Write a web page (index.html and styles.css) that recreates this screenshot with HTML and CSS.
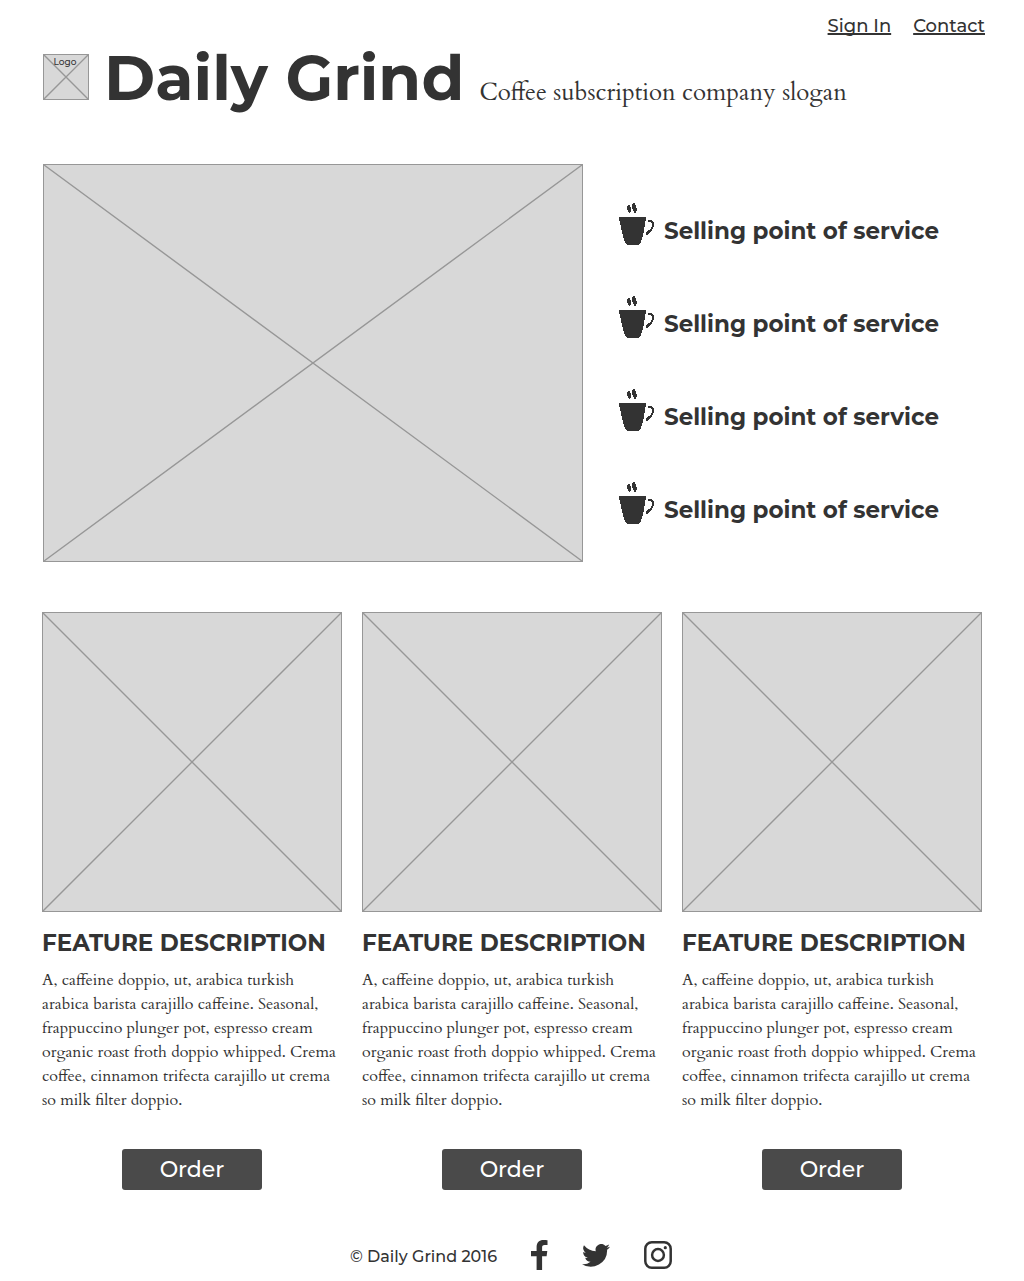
FILE: index.html
```html
<!DOCTYPE html>
<html lang="en">
<head>
  <meta charset="utf-8">
  <meta name="viewport" content="width=device-width, initial-scale=1">
  <title>Daily Grind</title>
  <link rel="stylesheet" href="styles.css">
</head>
<body>
  <svg class="defs" aria-hidden="true">
    <symbol id="cup" viewBox="0 0 36 42">
      <path d="M0 14h27v4h-1v6h-1v6h-1v4h-1v3h-1v3h-1v1h-1v1H8v-1H7v-1H6v-2H5v-3H4v-4H3v-4H2v-5H1v-4H0z"/>
      <path d="M9 2h2v2h1v5h-1v1h-1V9H9V7H8V3h1zM14 0h2v2h1v3h1v3h-1v2h-2V8h-1V6h-1V1h1z"/>
      <path d="M29 17h4v1h1v1h1v5h-1v2h-1v2h-1v1h-1v1h-1v1h-1v1h-2v-3h1v-1h1v-1h2v-1h1v-2h1v-4h-1v-1h-3z"/>
    </symbol>
  </svg>

  <div class="page">
    <nav class="top-nav">
      <a href="#signin">Sign In</a>
      <a href="#contact">Contact</a>
    </nav>

    <header class="brand">
      <div class="logo">
        <svg class="cross" viewBox="0 0 100 100" preserveAspectRatio="none" aria-hidden="true"><path d="M0 0L100 100M100 0L0 100"/></svg>
        <span class="logo-label">Logo</span>
      </div>
      <h1>Daily Grind</h1>
      <p class="slogan">Coffee subscription company slogan</p>
    </header>

    <main>
      <section class="hero">
        <div class="hero-image"><svg class="cross" viewBox="0 0 100 100" preserveAspectRatio="none" aria-hidden="true"><path d="M0 0L100 100M100 0L0 100"/></svg></div>
        <ul class="points">
          <li><svg class="cup" aria-hidden="true"><use href="#cup"/></svg><span>Selling point of service</span></li>
          <li><svg class="cup" aria-hidden="true"><use href="#cup"/></svg><span>Selling point of service</span></li>
          <li><svg class="cup" aria-hidden="true"><use href="#cup"/></svg><span>Selling point of service</span></li>
          <li><svg class="cup" aria-hidden="true"><use href="#cup"/></svg><span>Selling point of service</span></li>
        </ul>
      </section>

      <section class="features">
        <article class="feature">
          <div class="feature-image"><svg class="cross" viewBox="0 0 100 100" preserveAspectRatio="none" aria-hidden="true"><path d="M0 0L100 100M100 0L0 100"/></svg></div>
          <h2>FEATURE DESCRIPTION</h2>
          <p>A, caffeine doppio, ut, arabica turkish <br>arabica barista carajillo caffeine. Seasonal, <br>frappuccino plunger pot, espresso cream <br>organic roast froth doppio whipped. Crema <br>coffee, cinnamon trifecta carajillo ut crema <br>so milk filter doppio.</p>
          <button type="button">Order</button>
        </article>
        <article class="feature">
          <div class="feature-image"><svg class="cross" viewBox="0 0 100 100" preserveAspectRatio="none" aria-hidden="true"><path d="M0 0L100 100M100 0L0 100"/></svg></div>
          <h2>FEATURE DESCRIPTION</h2>
          <p>A, caffeine doppio, ut, arabica turkish <br>arabica barista carajillo caffeine. Seasonal, <br>frappuccino plunger pot, espresso cream <br>organic roast froth doppio whipped. Crema <br>coffee, cinnamon trifecta carajillo ut crema <br>so milk filter doppio.</p>
          <button type="button">Order</button>
        </article>
        <article class="feature">
          <div class="feature-image"><svg class="cross" viewBox="0 0 100 100" preserveAspectRatio="none" aria-hidden="true"><path d="M0 0L100 100M100 0L0 100"/></svg></div>
          <h2>FEATURE DESCRIPTION</h2>
          <p>A, caffeine doppio, ut, arabica turkish <br>arabica barista carajillo caffeine. Seasonal, <br>frappuccino plunger pot, espresso cream <br>organic roast froth doppio whipped. Crema <br>coffee, cinnamon trifecta carajillo ut crema <br>so milk filter doppio.</p>
          <button type="button">Order</button>
        </article>
      </section>
    </main>

    <footer class="footer">
      <span class="copyright">© Daily Grind 2016</span>
      <a href="#facebook" aria-label="Facebook"><svg width="17" height="30" viewBox="0 0 17 30"><path d="M16.500 .2V5h-2.800c-2.200 0-2.600 1-2.600 2.600V11h5.200l-.7 5.200h-4.500V30H5.600V16.200H0V11h5.600V7.100C5.600 2.600 8.300 0 12.400 0c1.900 0 3.600.1 4.100.2z"/></svg></a>
      <a href="#twitter" aria-label="Twitter"><svg width="28" height="23" viewBox="0 0 24 20" preserveAspectRatio="none"><path d="M24 2.400a9.800 9.800 0 0 1-2.800.8A4.900 4.900 0 0 0 23.300.5a9.900 9.900 0 0 1-3.100 1.200 4.900 4.900 0 0 0-8.400 4.500A14 14 0 0 1 1.700 1a4.900 4.900 0 0 0 1.500 6.600 4.900 4.900 0 0 1-2.200-.6 4.900 4.900 0 0 0 3.900 4.900 4.900 4.900 0 0 1-2.200.1 4.900 4.900 0 0 0 4.600 3.400A9.900 9.900 0 0 1 0 17.500 14 14 0 0 0 21.500 5.100 10 10 0 0 0 24 2.400z"/></svg></a>
      <a href="#instagram" aria-label="Instagram"><svg class="outline" width="28" height="28" viewBox="0 0 28 28"><rect x="1.300" y="1.300" width="25.400" height="25.400" rx="6.500"/><circle cx="14" cy="14" r="5.900"/><circle class="dot" cx="21.300" cy="6.700" r="1.600"/></svg></a>
    </footer>
  </div>
</body>
</html>
```
FILE: styles.css
```css
:root {
  --ink: #333;
  --line: #979797;
  --fill: #d8d8d8;
  --sans: Montserrat, Inter, "Liberation Sans", sans-serif;
  --serif: Cardo, "Liberation Serif", serif;
}

* {
  box-sizing: border-box;
}

body {
  margin: 0;
  background: #fff;
  color: var(--ink);
  font-family: var(--sans);
}

h1, h2, p, ul {
  margin: 0;
  padding: 0;
}

.defs {
  display: none;
}

.page {
  max-width: 1280px;
  margin: 0 auto;
  padding: 14px 39px 10px 42px;
}

.top-nav {
  display: flex;
  justify-content: flex-end;
  gap: 22px;
  font-size: 18px;
  font-weight: 500;
  line-height: 24px;
}

.top-nav a {
  color: inherit;
  text-decoration-thickness: 2px;
  text-underline-offset: 1px;
  text-decoration-skip-ink: none;
}

main {
  padding-right: 3px;
}

.brand {
  display: flex;
  align-items: baseline;
  gap: 15px;
  padding-left: 1px;
}

.logo {
  position: relative;
  align-self: flex-start;
  width: 46px;
  height: 46px;
  margin-top: 16px;
  border: 1px solid var(--line);
  background: var(--fill);
}

.logo-label {
  position: absolute;
  top: 1px;
  left: 0;
  right: 2px;
  font-size: 9px;
  font-weight: 500;
  line-height: 12px;
  text-align: center;
}

.cross {
  display: block;
  width: 100%;
  height: 100%;
}

.cross path {
  stroke: var(--line);
  stroke-width: 1.4;
  vector-effect: non-scaling-stroke;
}

h1 {
  font-size: 62px;
  font-weight: 700;
  line-height: 80px;
}

.slogan {
  font-family: var(--serif);
  font-size: 24px;
  line-height: 32px;
}

.hero {
  display: grid;
  grid-template-columns: 540fr 363fr;
  gap: 36px;
  margin-top: 46px;
  padding-left: 1px;
}

.hero-image {
  aspect-ratio: 540 / 398;
  border: 1px solid var(--line);
  background: var(--fill);
}

.points {
  display: flex;
  flex-direction: column;
  justify-content: center;
  gap: 51px;
  list-style: none;
}

.points li {
  display: flex;
  align-items: flex-end;
  gap: 9px;
  font-size: 23px;
  font-weight: 700;
  line-height: 28px;
}

.cup {
  width: 36px;
  height: 42px;
  fill: var(--ink);
}

.features {
  display: grid;
  grid-template-columns: repeat(3, 1fr);
  gap: 20px;
  margin-top: 50px;
}

.feature {
  display: flex;
  flex-direction: column;
}

.feature-image {
  aspect-ratio: 1;
  border: 1px solid var(--line);
  background: var(--fill);
}

h2 {
  margin: 16px 0 10px;
  font-size: 23px;
  font-weight: 700;
  line-height: 30px;
  white-space: nowrap;
}

.feature p {
  font-family: var(--serif);
  font-size: 16px;
  line-height: 24px;
}

button {
  align-self: center;
  width: 140px;
  height: 41px;
  margin-top: 37px;
  padding: 0;
  border: 0;
  border-radius: 3px;
  background: #4a4a4a;
  color: #fff;
  font-family: inherit;
  font-size: 22px;
  font-weight: 500;
}

.footer {
  display: flex;
  align-items: center;
  justify-content: center;
  gap: 34px;
  margin-top: 50px;
  padding-right: 5px;
}

.footer a {
  display: flex;
}

.footer svg {
  fill: var(--ink);
}

.footer .outline {
  fill: none;
  stroke: var(--ink);
  stroke-width: 2.500;
}

.footer .dot {
  fill: var(--ink);
  stroke: none;
}

.copyright {
  padding-top: 3px;
  font-size: 16px;
  font-weight: 500;
  line-height: 20px;
}
```
